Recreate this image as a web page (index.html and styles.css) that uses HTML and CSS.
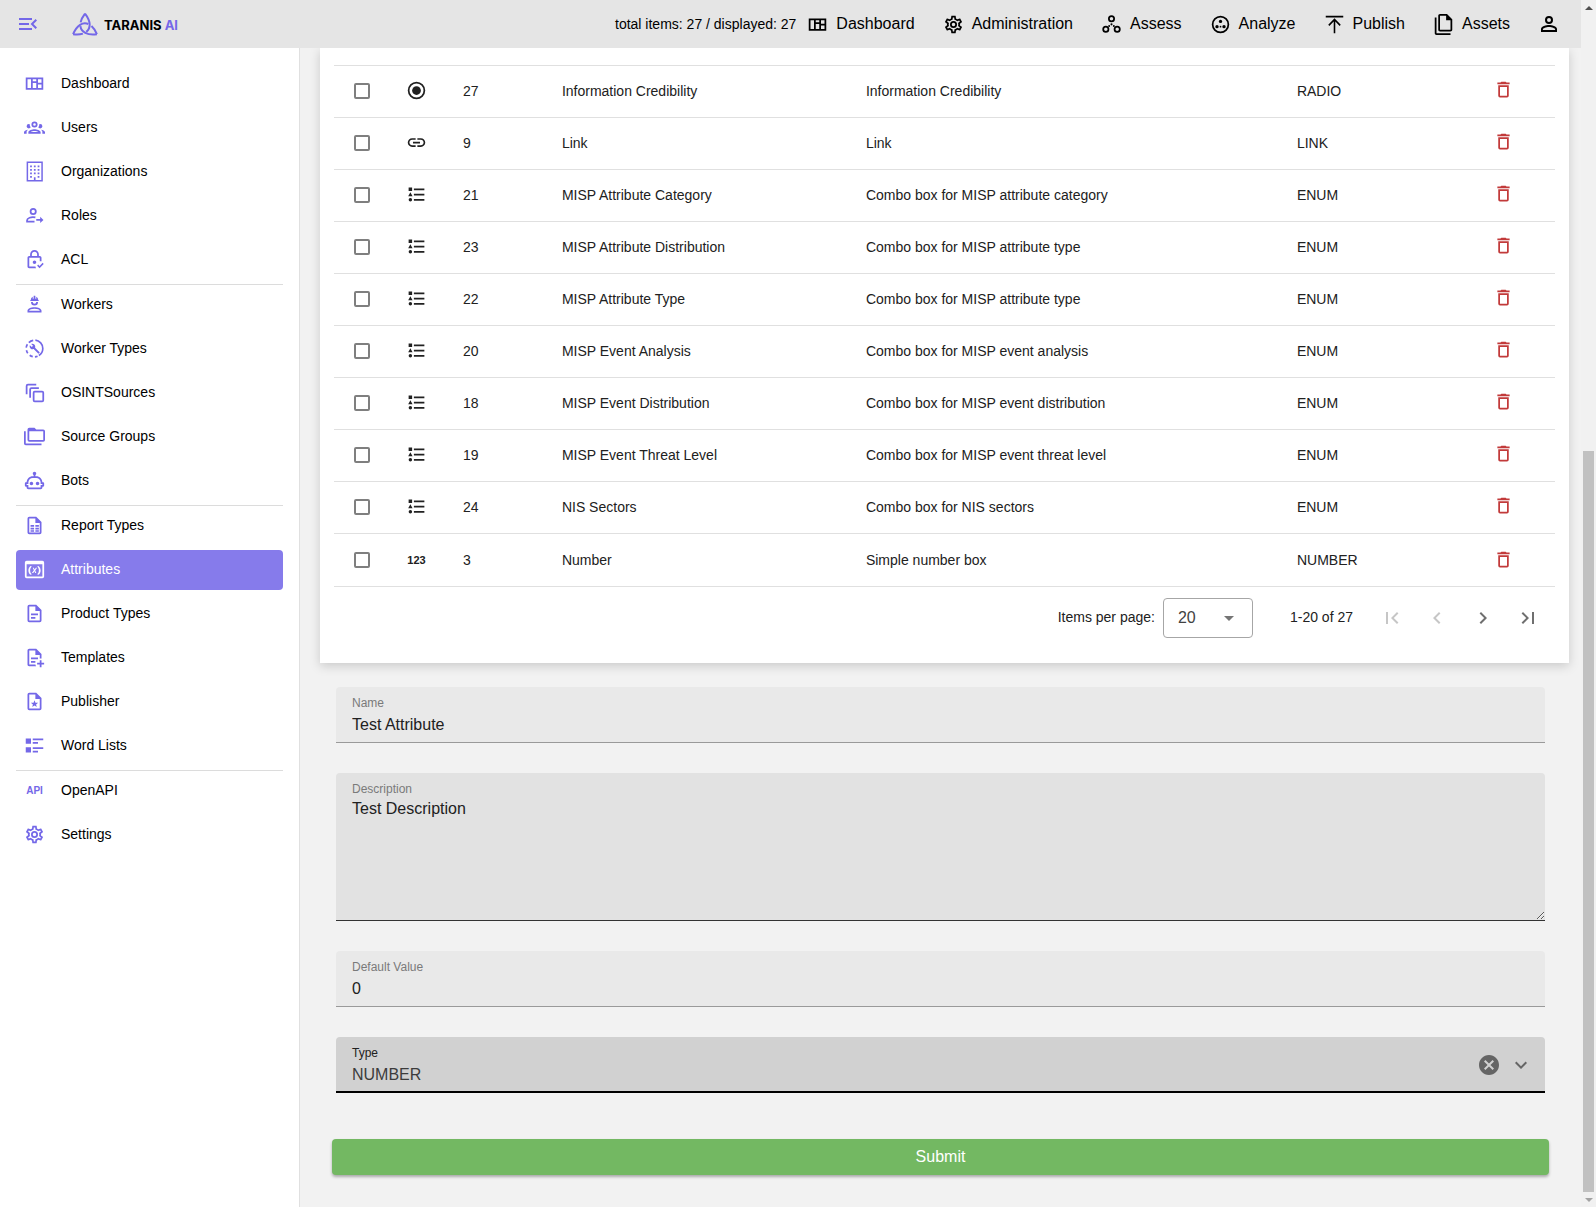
FILE: index.html
```html
<!DOCTYPE html>
<html lang="en">
<head>
<meta charset="utf-8">
<title>Taranis AI - Attributes</title>
<meta name="viewport" content="width=device-width, initial-scale=1">
<link rel="stylesheet" href="styles.css">
</head>
<body>
<svg class="sprite" aria-hidden="true">
  <symbol id="i-menu" viewBox="0 0 24 24"><path d="M21,15.61L19.59,17L14.58,12L19.59,7L21,8.39L17.44,12L21,15.61M3,6H16V8H3V6M3,13V11H13V13H3M3,18V16H16V18H3Z"/></symbol>
  <symbol id="i-dash" viewBox="0 0 24 24"><path fill-rule="evenodd" d="M2 5H22V19H2ZM4 7V17H8V7ZM10 7V9.500H14V7ZM10 11.500V17H14V11.500ZM16 7V11H20V7ZM16 13V17H20V13Z"/></symbol>
  <symbol id="i-users" viewBox="0 0 24 24"><path d="M12,5A3.5,3.5 0 0,0 8.5,8.5A3.5,3.5 0 0,0 12,12A3.5,3.5 0 0,0 15.5,8.5A3.5,3.5 0 0,0 12,5M12,7A1.5,1.5 0 0,1 13.5,8.5A1.5,1.5 0 0,1 12,10A1.5,1.5 0 0,1 10.5,8.5A1.5,1.5 0 0,1 12,7M5.5,8A2.5,2.5 0 0,0 3,10.5C3,11.44 3.53,12.25 4.29,12.68C4.65,12.88 5.06,13 5.5,13C5.94,13 6.35,12.88 6.71,12.68C7.08,12.47 7.39,12.17 7.62,11.81C6.89,10.86 6.5,9.7 6.5,8.5C6.5,8.41 6.5,8.31 6.5,8.22C6.2,8.08 5.86,8 5.5,8M18.5,8C18.14,8 17.8,8.08 17.5,8.22C17.5,8.31 17.5,8.41 17.5,8.5C17.5,9.7 17.11,10.86 16.38,11.81C16.5,12 16.63,12.15 16.78,12.3C16.94,12.45 17.1,12.58 17.29,12.68C17.65,12.88 18.06,13 18.5,13C18.94,13 19.35,12.88 19.71,12.68C20.47,12.25 21,11.44 21,10.5A2.5,2.5 0 0,0 18.5,8M12,14C9.66,14 5,15.17 5,17.5V19H19V17.5C19,15.17 14.34,14 12,14M4.71,14.55C2.78,14.78 0,15.76 0,17.5V19H3V17.07C3,16.06 3.69,15.22 4.71,14.55M19.29,14.55C20.31,15.22 21,16.06 21,17.07V19H24V17.5C24,15.76 21.22,14.78 19.29,14.55M12,16C13.53,16 15.24,16.5 16.23,17H7.77C8.76,16.5 10.47,16 12,16Z"/></symbol>
  <symbol id="i-org" viewBox="0 0 24 24"><path fill-rule="evenodd" d="M3 0.500H21.500V23.500H3ZM4.700 2.200V21.800H11.300V18.500H13.200V21.800H19.800V2.200Z"/><path d="M7 5h2v2H7zM11.300 5h2v2h-2zM15.600 5h2v2h-2zM7 9h2v2H7zM11.300 9h2v2h-2zM15.600 9h2v2h-2zM7 13h2v2H7zM11.300 13h2v2h-2zM15.600 13h2v2h-2zM7 17h2v2H7zM15.600 17h2v2h-2z"/></symbol>
  <symbol id="i-roles" viewBox="0 0 24 24"><g fill="none" stroke="currentColor" stroke-width="2"><circle cx="10.500" cy="7.500" r="3"/><path d="M13 14.200C8 13.200 3.500 15 3.500 17.500V19H12M14 17H20"/></g><path d="M18.500 13.500L22.200 17L18.500 20.500Z"/></symbol>
  <symbol id="i-acl" viewBox="0 0 24 24"><path d="M14 15C14 16.11 13.11 17 12 17C10.89 17 10 16.1 10 15C10 13.89 10.89 13 12 13C13.1 13 14 13.9 14 15M13.09 20C13.21 20.72 13.46 21.39 13.81 22H6C4.89 22 4 21.1 4 20V10C4 8.89 4.89 8 6 8H7V6C7 3.24 9.24 1 12 1S17 3.24 17 6V8H18C19.11 8 20 8.9 20 10V14.09C19.67 14.04 19.34 14 19 14C18.66 14 18.33 14.04 18 14.09V10H6V20H13.09M9 8H15V6C15 4.34 13.66 3 12 3S9 4.34 9 6V8M21.34 15.84L17.75 19.43L16.16 17.84L15 19L17.75 22L22.5 17.25L21.34 15.84Z"/></symbol>
  <symbol id="i-worker" viewBox="0 0 24 24"><path fill-rule="evenodd" d="M12,15C7.58,15 4,16.79 4,19V21H20V19C20,16.79 16.42,15 12,15M12 16.900C15.200 16.900 18.100 18 18.100 19.100H5.900C5.900 18 8.800 16.900 12 16.900M8,9A4,4 0 0,0 16,9H14A2 2 0 0 1 10 9M11.5,2C11.2,2 11,2.21 11,2.5V5.5H10V3C10,3 7.75,3.86 7.75,6.75C7.75,6.75 7,6.89 7,8H17C16.95,6.89 16.25,6.75 16.25,6.75C16.25,3.86 14,3 14,3V5.5H13V2.5C13,2.21 12.81,2 12.5,2H11.5Z"/></symbol>
  <symbol id="i-wtypes" viewBox="0 0 24 24"><g fill="none" stroke="currentColor" stroke-width="1.900"><path d="M13 2.500A9.500 9.500 0 0 1 21.500 12A9.500 9.500 0 0 1 17 20"/><path d="M15.500 20.800A9.500 9.500 0 0 1 12.500 21.500M10 21.300A9.500 9.500 0 0 1 6.500 19.700M4.300 17.500A9.500 9.500 0 0 1 2.800 14M2.500 11A9.500 9.500 0 0 1 3.900 7.200M5.500 5.200A9.500 9.500 0 0 1 10.500 2.700"/></g><path d="M17.800 16.200L12.700 11.100C13.100 9.800 12.800 8.400 11.800 7.500C10.800 6.500 9.400 6.300 8.200 6.800L10.300 8.900L8.900 10.400L6.700 8.300C6.200 9.500 6.500 10.900 7.500 11.900C8.400 12.800 9.800 13.100 11 12.700L16.200 17.800C16.400 18 16.700 18 16.900 17.800L17.800 16.900C18 16.700 18 16.400 17.800 16.200Z"/></symbol>
  <symbol id="i-osint" viewBox="0 0 24 24"><g fill="none" stroke="currentColor" stroke-width="2"><rect x="11" y="11" width="11" height="11" rx="1.200"/><path d="M7 18V8.500Q7 7 8.500 7H17M3 14V4.500Q3 3 4.500 3H14"/></g></symbol>
  <symbol id="i-groups" viewBox="0 0 24 24"><path d="M22,4H14L12,2H6A2,2 0 0,0 4,4V16A2,2 0 0,0 6,18H22A2,2 0 0,0 24,16V6A2,2 0 0,0 22,4M2,6H0V20A2,2 0 0,0 2,22H20V20H2V6M6,6H22V16H6V6Z" fill-rule="evenodd"/></symbol>
  <symbol id="i-bot" viewBox="0 0 24 24"><path d="M17.5 15.5C17.5 16.61 16.61 17.5 15.5 17.5S13.5 16.61 13.5 15.5 14.4 13.5 15.5 13.5 17.5 14.4 17.5 15.5M8.5 13.5C7.4 13.5 6.5 14.4 6.5 15.5S7.4 17.5 8.5 17.5 10.5 16.61 10.5 15.5 9.61 13.5 8.5 13.5M23 15V18C23 18.55 22.55 19 22 19H21V20C21 21.11 20.11 22 19 22H5C3.9 22 3 21.11 3 20V19H2C1.45 19 1 18.55 1 18V15C1 14.45 1.45 14 2 14H3C3 10.13 6.13 7 10 7H11V5.73C10.4 5.39 10 4.74 10 4C10 2.9 10.9 2 12 2S14 2.9 14 4C14 4.74 13.6 5.39 13 5.73V7H14C17.87 7 21 10.13 21 14H22C22.55 14 23 14.45 23 15M21 16H19V14C19 11.24 16.76 9 14 9H10C7.24 9 5 11.24 5 14V16H3V17H5V20H19V17H21V16Z"/></symbol>
  <symbol id="i-file" viewBox="0 0 24 24"><path d="M14,2H6A2,2 0 0,0 4,4V20A2,2 0 0,0 6,22H18A2,2 0 0,0 20,20V8L14,2M18,20H6V4H13V9H18V20Z"/></symbol>
  <symbol id="i-report" viewBox="0 0 24 24"><use href="#i-file"/><path d="M7.500 11.500h4v2h-4zM13 11.500h4v2h-4zM7.500 14.500h4v2h-4zM13 14.500h4v2h-4zM7.500 17.500h4v1.500h-4zM13 17.500h4v1.500h-4z"/></symbol>
  <symbol id="i-attr" viewBox="0 0 24 24"><path d="M21 2H3A2 2 0 0 0 1 4V20A2 2 0 0 0 3 22H21A2 2 0 0 0 23 20V4A2 2 0 0 0 21 2M21 20H3V6H21V20M16.6 8C18.1 9.3 19 11.1 19 13C19 14.9 18.1 16.7 16.6 18L15 17.4C16.3 16.4 17 14.7 17 13S16.3 9.6 15 8.6L16.6 8M7.4 8L9 8.6C7.7 9.6 7 11.3 7 13S7.7 16.4 9 17.4L7.4 18C5.9 16.7 5 14.9 5 13S5.9 9.3 7.4 8M12.1 12L13.5 10H15L12.8 13L14.1 16H12.8L12 14L10.6 16H9L11.3 12.9L10 10H11.3L12.1 12Z"/></symbol>
  <symbol id="i-product" viewBox="0 0 24 24"><use href="#i-file"/><path d="M8 12H16V14H8V12M8 16H13V18H8V16Z"/></symbol>
  <symbol id="i-template" viewBox="0 0 24 24"><path d="M23 18H20V15H18V18H15V20H18V23H20V20H23M6 2C4.89 2 4 2.9 4 4V20C4 21.11 4.89 22 6 22H13.81C13.45 21.38 13.2 20.7 13.08 20H6V4H13V9H18V13.08C18.33 13.03 18.67 13 19 13C19.34 13 19.67 13.03 20 13.08V8L14 2M8 12V14H16V12M8 16V18H13V16Z"/></symbol>
  <symbol id="i-publisher" viewBox="0 0 24 24"><use href="#i-file"/><path d="M12 10.500L13.100 13.300L16.200 13.500L13.800 15.400L14.600 18.400L12 16.700L9.400 18.400L10.200 15.400L7.800 13.500L10.900 13.300Z"/></symbol>
  <symbol id="i-words" viewBox="0 0 24 24"><path d="M2 14H8V20H2M16 8H10V10H16M2 10H8V4H2M10 4V6H22V4M10 20H16V18H10M10 16H22V14H10"/></symbol>
  <symbol id="i-cog" viewBox="0 0 24 24"><path d="M12,8A4,4 0 0,1 16,12A4,4 0 0,1 12,16A4,4 0 0,1 8,12A4,4 0 0,1 12,8M12,10A2,2 0 0,0 10,12A2,2 0 0,0 12,14A2,2 0 0,0 14,12A2,2 0 0,0 12,10M10,22C9.75,22 9.54,21.82 9.5,21.58L9.13,18.93C8.5,18.68 7.96,18.34 7.44,17.94L4.95,18.95C4.73,19.03 4.46,18.95 4.34,18.73L2.34,15.27C2.21,15.05 2.27,14.78 2.46,14.63L4.57,12.97L4.5,12L4.57,11L2.46,9.37C2.27,9.22 2.21,8.95 2.34,8.73L4.34,5.27C4.46,5.05 4.73,4.96 4.95,5.05L7.44,6.05C7.96,5.66 8.5,5.32 9.13,5.07L9.5,2.42C9.54,2.18 9.75,2 10,2H14C14.25,2 14.46,2.18 14.5,2.42L14.87,5.07C15.5,5.32 16.04,5.66 16.56,6.05L19.05,5.05C19.27,4.96 19.54,5.05 19.66,5.27L21.66,8.73C21.79,8.95 21.73,9.22 21.54,9.37L19.43,11L19.5,12L19.43,13L21.54,14.63C21.73,14.78 21.79,15.05 21.66,15.27L19.66,18.73C19.54,18.95 19.27,19.04 19.05,18.95L16.56,17.95C16.04,18.34 15.5,18.68 14.87,18.93L14.5,21.58C14.46,21.82 14.25,22 14,22H10M11.25,4L10.88,6.61C9.68,6.86 8.62,7.5 7.85,8.39L5.44,7.35L4.69,8.65L6.8,10.2C6.4,11.37 6.4,12.64 6.8,13.8L4.68,15.36L5.43,16.66L7.86,15.62C8.63,16.5 9.68,17.14 10.87,17.38L11.24,20H12.76L13.13,17.39C14.32,17.14 15.37,16.5 16.14,15.62L18.57,16.66L19.32,15.36L17.2,13.81C17.6,12.64 17.6,11.37 17.2,10.2L19.31,8.65L18.56,7.35L16.15,8.39C15.38,7.5 14.32,6.86 13.12,6.62L12.75,4H11.25Z"/></symbol>
  <symbol id="i-assess" viewBox="0 0 24 24"><g fill="none" stroke="currentColor" stroke-width="2"><circle cx="12" cy="5.500" r="3"/><circle cx="5.500" cy="17.500" r="3"/><circle cx="18.500" cy="17.500" r="3"/></g><circle cx="12" cy="11.800" r="1.200"/><circle cx="9.300" cy="13.800" r="1.100"/><circle cx="14.700" cy="13.800" r="1.100"/></symbol>
  <symbol id="i-analyze" viewBox="0 0 24 24"><circle cx="12" cy="12" r="9" fill="none" stroke="currentColor" stroke-width="2"/><circle cx="12" cy="8.500" r="1.900"/><circle cx="8" cy="14.500" r="1.900"/><circle cx="16" cy="14.500" r="1.900"/><circle cx="12" cy="14.500" r="1"/></symbol>
  <symbol id="i-publish" viewBox="0 0 24 24"><path fill="none" stroke="currentColor" stroke-width="1.800" d="M2 3H22M12 22V6M5.500 13L12 6.200L18.500 13"/></symbol>
  <symbol id="i-assets" viewBox="0 0 24 24"><path d="M16 0H8C6.9 0 6 .9 6 2V18C6 19.1 6.9 20 8 20H20C21.1 20 22 19.1 22 18V6L16 0M20 18H8V2H15V7H20V18M4 4V22H20V24H4C2.9 24 2 23.1 2 22V4H4Z"/></symbol>
  <symbol id="i-account" viewBox="0 0 24 24"><path d="M12,4A4,4 0 0,1 16,8A4,4 0 0,1 12,12A4,4 0 0,1 8,8A4,4 0 0,1 12,4M12,6A2,2 0 0,0 10,8A2,2 0 0,0 12,10A2,2 0 0,0 14,8A2,2 0 0,0 12,6M12,13C14.67,13 20,14.33 20,17V20H4V17C4,14.33 9.33,13 12,13M12,14.9C9.03,14.9 5.9,16.36 5.9,17V18.1H18.1V17C18.1,16.36 14.97,14.9 12,14.9Z"/></symbol>
  <symbol id="i-radio" viewBox="0 0 24 24"><circle cx="12" cy="12" r="9" fill="none" stroke="currentColor" stroke-width="2"/><circle cx="12" cy="12" r="5"/></symbol>
  <symbol id="i-link" viewBox="0 0 24 24"><path d="M3.9,12C3.9,10.29 5.29,8.9 7,8.9H11V7H7A5,5 0 0,0 2,12A5,5 0 0,0 7,17H11V15.1H7C5.29,15.1 3.9,13.71 3.9,12M8,13H16V11H8V13M17,7H13V8.9H17C18.71,8.9 20.1,10.29 20.1,12C20.1,13.71 18.71,15.1 17,15.1H13V17H17A5,5 0 0,0 22,12A5,5 0 0,0 17,7Z"/></symbol>
  <symbol id="i-enum" viewBox="0 0 24 24"><path d="M5,9.5L7.5,14H2.5L5,9.5M3,4H7V8H3V4M5,20A2,2 0 0,0 7,18A2,2 0 0,0 5,16A2,2 0 0,0 3,18A2,2 0 0,0 5,20M9,5V7H21V5H9M9,19H21V17H9V19M9,13H21V11H9V13Z"/></symbol>
  <symbol id="i-delete" viewBox="0 0 24 24"><path d="M6,19A2,2 0 0,0 8,21H16A2,2 0 0,0 18,19V7H6V19M8,9H16V19H8V9M15.5,4L14.5,3H9.5L8.5,4H5V6H19V4H15.5Z"/></symbol>
  <symbol id="i-first" viewBox="0 0 24 24"><path d="M18.41,16.59L13.82,12L18.41,7.41L17,6L11,12L17,18L18.41,16.59M6,6H8V18H6V6Z"/></symbol>
  <symbol id="i-prev" viewBox="0 0 24 24"><path d="M15.41,16.58L10.83,12L15.41,7.41L14,6L8,12L14,18L15.41,16.58Z"/></symbol>
  <symbol id="i-next" viewBox="0 0 24 24"><path d="M8.59,16.58L13.17,12L8.59,7.41L10,6L16,12L10,18L8.59,16.58Z"/></symbol>
  <symbol id="i-last" viewBox="0 0 24 24"><path d="M5.59,7.41L10.18,12L5.59,16.59L7,18L13,12L7,6L5.59,7.41M16,6H18V18H16V6Z"/></symbol>
  <symbol id="i-caret" viewBox="0 0 24 24"><path d="M7,10L12,15L17,10H7Z"/></symbol>
  <symbol id="i-clear" viewBox="0 0 24 24"><path d="M12,2C17.53,2 22,6.47 22,12C22,17.53 17.53,22 12,22C6.47,22 2,17.53 2,12C2,6.47 6.47,2 12,2M15.59,7L12,10.59L8.41,7L7,8.41L10.59,12L7,15.59L8.41,17L12,13.41L15.59,17L17,15.59L13.41,12L17,8.41L15.59,7Z"/></symbol>
  <symbol id="i-down" viewBox="0 0 24 24"><path d="M7.41,8.58L12,13.17L16.59,8.58L18,10L12,16L6,10L7.41,8.58Z"/></symbol>
</svg>

<div class="window">
  <div class="app">
    <header class="topbar">
      <button class="icon-btn menu-btn" aria-label="Toggle menu"><svg class="icon-lg"><use href="#i-menu"/></svg></button>
      <a class="brand" href="#">
        <svg class="brand-mark" viewBox="0 0 26 24">
          <path id="leaf" pathLength="100" d="M13 1.600C22.600 14 16.800 24.300 1.100 22.200"/>
          <use href="#leaf" transform="rotate(120 13 15.330)"/>
          <use href="#leaf" transform="rotate(240 13 15.330)"/>
        </svg>
        <span class="brand-name">TARANIS <span class="brand-ai">AI</span></span>
      </a>
      <span class="counts">total items: 27 / displayed: 27</span>
      <nav class="topnav" aria-label="Main">
        <a href="#"><svg class="icon"><use href="#i-dash"/></svg>Dashboard</a>
        <a href="#"><svg class="icon"><use href="#i-cog"/></svg>Administration</a>
        <a href="#"><svg class="icon"><use href="#i-assess"/></svg>Assess</a>
        <a href="#"><svg class="icon"><use href="#i-analyze"/></svg>Analyze</a>
        <a href="#"><svg class="icon"><use href="#i-publish"/></svg>Publish</a>
        <a href="#"><svg class="icon"><use href="#i-assets"/></svg>Assets</a>
      </nav>
      <button class="icon-btn" aria-label="Account"><svg class="icon-lg"><use href="#i-account"/></svg></button>
    </header>

    <nav class="sidebar" aria-label="Administration">
      <a href="#"><svg class="icon"><use href="#i-dash"/></svg>Dashboard</a>
      <a href="#"><svg class="icon"><use href="#i-users"/></svg>Users</a>
      <a href="#"><svg class="icon"><use href="#i-org"/></svg>Organizations</a>
      <a href="#"><svg class="icon"><use href="#i-roles"/></svg>Roles</a>
      <a href="#"><svg class="icon"><use href="#i-acl"/></svg>ACL</a>
      <hr>
      <a href="#"><svg class="icon"><use href="#i-worker"/></svg>Workers</a>
      <a href="#"><svg class="icon"><use href="#i-wtypes"/></svg>Worker Types</a>
      <a href="#"><svg class="icon"><use href="#i-osint"/></svg>OSINTSources</a>
      <a href="#"><svg class="icon"><use href="#i-groups"/></svg>Source Groups</a>
      <a href="#"><svg class="icon"><use href="#i-bot"/></svg>Bots</a>
      <hr>
      <a href="#"><svg class="icon"><use href="#i-report"/></svg>Report Types</a>
      <a href="#" class="active" aria-current="page"><svg class="icon"><use href="#i-attr"/></svg>Attributes</a>
      <a href="#"><svg class="icon"><use href="#i-product"/></svg>Product Types</a>
      <a href="#"><svg class="icon"><use href="#i-template"/></svg>Templates</a>
      <a href="#"><svg class="icon"><use href="#i-publisher"/></svg>Publisher</a>
      <a href="#"><svg class="icon"><use href="#i-words"/></svg>Word Lists</a>
      <hr>
      <a href="#"><span class="icon text-icon" aria-hidden="true">API</span>OpenAPI</a>
      <a href="#"><svg class="icon"><use href="#i-cog"/></svg>Settings</a>
    </nav>

    <main class="content">
      <section class="card">
        <table class="attributes">
          <colgroup><col class="c-check"><col class="c-icon"><col class="c-id"><col class="c-name"><col class="c-desc"><col><col class="c-actions"></colgroup>
          <tbody>
            <tr><td><input type="checkbox" aria-label="Select 27"></td><td><svg class="icon"><use href="#i-radio"/></svg></td><td>27</td><td>Information Credibility</td><td>Information Credibility</td><td>RADIO</td><td><button class="delete" aria-label="Delete 27"><svg class="icon"><use href="#i-delete"/></svg></button></td></tr>
            <tr><td><input type="checkbox" aria-label="Select 9"></td><td><svg class="icon"><use href="#i-link"/></svg></td><td>9</td><td>Link</td><td>Link</td><td>LINK</td><td><button class="delete" aria-label="Delete 9"><svg class="icon"><use href="#i-delete"/></svg></button></td></tr>
            <tr><td><input type="checkbox" aria-label="Select 21"></td><td><svg class="icon"><use href="#i-enum"/></svg></td><td>21</td><td>MISP Attribute Category</td><td>Combo box for MISP attribute category</td><td>ENUM</td><td><button class="delete" aria-label="Delete 21"><svg class="icon"><use href="#i-delete"/></svg></button></td></tr>
            <tr><td><input type="checkbox" aria-label="Select 23"></td><td><svg class="icon"><use href="#i-enum"/></svg></td><td>23</td><td>MISP Attribute Distribution</td><td>Combo box for MISP attribute type</td><td>ENUM</td><td><button class="delete" aria-label="Delete 23"><svg class="icon"><use href="#i-delete"/></svg></button></td></tr>
            <tr><td><input type="checkbox" aria-label="Select 22"></td><td><svg class="icon"><use href="#i-enum"/></svg></td><td>22</td><td>MISP Attribute Type</td><td>Combo box for MISP attribute type</td><td>ENUM</td><td><button class="delete" aria-label="Delete 22"><svg class="icon"><use href="#i-delete"/></svg></button></td></tr>
            <tr><td><input type="checkbox" aria-label="Select 20"></td><td><svg class="icon"><use href="#i-enum"/></svg></td><td>20</td><td>MISP Event Analysis</td><td>Combo box for MISP event analysis</td><td>ENUM</td><td><button class="delete" aria-label="Delete 20"><svg class="icon"><use href="#i-delete"/></svg></button></td></tr>
            <tr><td><input type="checkbox" aria-label="Select 18"></td><td><svg class="icon"><use href="#i-enum"/></svg></td><td>18</td><td>MISP Event Distribution</td><td>Combo box for MISP event distribution</td><td>ENUM</td><td><button class="delete" aria-label="Delete 18"><svg class="icon"><use href="#i-delete"/></svg></button></td></tr>
            <tr><td><input type="checkbox" aria-label="Select 19"></td><td><svg class="icon"><use href="#i-enum"/></svg></td><td>19</td><td>MISP Event Threat Level</td><td>Combo box for MISP event threat level</td><td>ENUM</td><td><button class="delete" aria-label="Delete 19"><svg class="icon"><use href="#i-delete"/></svg></button></td></tr>
            <tr><td><input type="checkbox" aria-label="Select 24"></td><td><svg class="icon"><use href="#i-enum"/></svg></td><td>24</td><td>NIS Sectors</td><td>Combo box for NIS sectors</td><td>ENUM</td><td><button class="delete" aria-label="Delete 24"><svg class="icon"><use href="#i-delete"/></svg></button></td></tr>
            <tr><td><input type="checkbox" aria-label="Select 3"></td><td><span class="icon text-icon wide" aria-hidden="true">123</span></td><td>3</td><td>Number</td><td>Simple number box</td><td>NUMBER</td><td><button class="delete" aria-label="Delete 3"><svg class="icon"><use href="#i-delete"/></svg></button></td></tr>
          </tbody>
        </table>
        <div class="table-footer">
          <label for="per-page">Items per page:</label>
          <span class="per-page">
            <select id="per-page"><option>10</option><option selected>20</option><option>50</option></select>
            <svg class="icon-lg"><use href="#i-caret"/></svg>
          </span>
          <span class="range">1-20 of 27</span>
          <div class="pager">
            <button class="icon-btn" aria-label="First page" disabled><svg class="icon-lg"><use href="#i-first"/></svg></button>
            <button class="icon-btn" aria-label="Previous page" disabled><svg class="icon-lg"><use href="#i-prev"/></svg></button>
            <button class="icon-btn" aria-label="Next page"><svg class="icon-lg"><use href="#i-next"/></svg></button>
            <button class="icon-btn" aria-label="Last page"><svg class="icon-lg"><use href="#i-last"/></svg></button>
          </div>
        </div>
      </section>

      <form class="form">
        <div class="field">
          <label for="name">Name</label>
          <input id="name" type="text" value="Test Attribute">
        </div>
        <div class="field hovered">
          <label for="description">Description</label>
          <textarea id="description">Test Description</textarea>
        </div>
        <div class="field">
          <label for="default">Default Value</label>
          <input id="default" type="text" value="0">
        </div>
        <div class="field focused">
          <label for="type">Type</label>
          <select id="type"><option>NUMBER</option><option>STRING</option></select>
          <div class="field-icons">
            <button type="button" class="icon-btn" aria-label="Clear Type"><svg class="icon-lg"><use href="#i-clear"/></svg></button>
            <svg class="icon-lg"><use href="#i-down"/></svg>
          </div>
        </div>
        <button class="submit" type="button">Submit</button>
      </form>
    </main>
  </div>

  <div class="scrollbar" aria-hidden="true">
    <span class="arrow up"></span>
    <div class="track"><div class="thumb"></div></div>
    <span class="arrow down"></span>
  </div>
</div>
</body>
</html>
```
FILE: styles.css
```css
:root {
  --primary: #7468e8;
  --line: #e0e0e0;
  --page: #f2f2f2;
}

* { box-sizing: border-box; }

body {
  margin: 0;
  background: var(--page);
  color: #212121;
  font: 14px/20px "Liberation Sans", Arial, sans-serif;
}

a { color: #000; text-decoration: none; }

button, input, select, textarea {
  margin: 0;
  padding: 0;
  border: 0;
  background: none;
  color: inherit;
  font: inherit;
  outline: none;
}

svg { display: block; fill: currentColor; }

.sprite { display: none; }
.icon { flex: none; width: 21px; height: 21px; }
.icon-lg { flex: none; width: 24px; height: 24px; }
.icon-btn { display: flex; align-items: center; justify-content: center; }

.text-icon {
  display: flex;
  align-items: center;
  justify-content: center;
  font-size: 10px;
  font-weight: bold;
}
.text-icon.wide { font-size: 11px; }

/* Page frame */

.window {
  display: grid;
  grid-template-columns: minmax(0, 1fr) 15px;
  min-height: 100vh;
}

.app {
  display: grid;
  grid-template-columns: 300px minmax(0, 1fr);
  grid-template-rows: 48px 1fr;
}

.topbar {
  grid-column: 1 / -1;
  z-index: 1;
  display: flex;
  align-items: center;
  padding: 0 20px 0 16px;
  background: #e5e5e5;
  color: #000;
}

.menu-btn { color: var(--primary); }

.brand {
  display: flex;
  align-items: center;
  gap: 6px;
  margin-left: 32px;
}
.brand-mark {
  width: 26px;
  height: 24px;
  overflow: visible;
  fill: none;
  stroke: var(--primary);
  stroke-width: 2;
  stroke-linejoin: round;
  stroke-dasharray: 60 11 29;
}
.brand-name { padding-top: 2px; font: bold 13px/20px Inter, sans-serif; }
.brand-ai { color: var(--primary); }

.counts { margin-left: auto; }

.topnav {
  display: flex;
  gap: 28px;
  margin: 0 27px 0 11px;
}
.topnav a {
  display: flex;
  align-items: center;
  gap: 8px;
  font-size: 16px;
  line-height: 46px;
}

/* Sidebar */

.sidebar {
  padding: 16px;
  border-right: 1px solid var(--line);
  background: #fff;
}
.sidebar a {
  display: flex;
  align-items: center;
  gap: 16px;
  height: 40px;
  margin-bottom: 4px;
  padding: 0 8px 1px;
  border-radius: 4px;
  line-height: 17px;
}
.sidebar .icon { color: var(--primary); }
.sidebar .active { background: #867beb; color: #fff; }
.sidebar .active .icon { color: #fff; }
.sidebar hr {
  height: 1px;
  margin: 0;
  border: 0;
  background: #dcdcdc;
}

/* Attribute table */

.content { padding: 0 12px 24px 20px; overflow: hidden; }

.card {
  padding: 17px 14px 25px;
  background: #fff;
  box-shadow: 0 3px 10px rgba(0, 0, 0, .17);
}

.attributes {
  width: 100%;
  border-spacing: 0;
  table-layout: fixed;
}
.c-check { width: 56px; }
.c-icon { width: 57px; }
.c-id { width: 8.1%; }
.c-name { width: 24.9%; }
.c-desc { width: 35.3%; }
.c-actions { width: 82px; }

.attributes td {
  height: 52px;
  padding: 0 16px 2px;
  border-top: 1px solid var(--line);
}
.attributes tr:last-child td { height: 53px; padding-bottom: 0; }

.attributes input {
  display: block;
  width: 16px;
  height: 16px;
  margin-left: 4px;
  border: 2px solid #7f7f7f;
  border-radius: 2px;
  appearance: none;
}

.delete { display: block; margin: 0 0 2px 4px; color: #c23a3a; }

.table-footer {
  display: flex;
  align-items: center;
  justify-content: flex-end;
  padding: 11px 4px 0;
  border-top: 1px solid var(--line);
}
.table-footer label, .range { padding-bottom: 2px; }

.per-page {
  display: flex;
  align-items: center;
  width: 90px;
  height: 40px;
  margin: 0 37px 0 8px;
  padding-right: 11px;
  border: 1px solid #a6a6a6;
  border-radius: 4px;
  color: #757575;
}
.per-page select {
  flex: 1;
  min-width: 0;
  padding-left: 14px;
  color: #424242;
  font-size: 16px;
  appearance: none;
}

.pager { display: flex; width: 182px; margin-left: 16px; color: #6f6f6f; }
.pager button { flex: 1; }
.pager button:disabled { color: #c6c6c6; }

/* Form */

.form {
  display: flex;
  flex-direction: column;
  gap: 30px;
  padding: 24px 20px 0 12px;
}

.field {
  display: grid;
  grid-template-columns: minmax(0, 1fr) auto;
  margin: 0 4px;
  border-bottom: 1px solid #9a9a9a;
  border-radius: 4px 4px 0 0;
  background: #e9e9e9;
}
.field label {
  grid-column: 1;
  padding: 8px 16px 0;
  color: #7a7a7a;
  font-size: 12px;
  line-height: 16px;
}
.field input, .field select {
  grid-column: 1;
  height: 31px;
  padding: 0 16px 4px;
  font-size: 16px;
  line-height: 24px;
  appearance: none;
}
.field textarea {
  grid-column: 1 / -1;
  height: 123px;
  padding: 0 16px;
  font-size: 16px;
  line-height: 24px;
  resize: vertical;
}

.field.hovered { border-color: #333; background: #e2e2e2; }
.field.focused { border-bottom: 2px solid #000; background: #d1d1d1; }
.field.focused label { color: #212121; }
.field.focused select { height: 30px; padding-bottom: 2px; color: #3c3c3c; }

.field-icons {
  grid-column: 2;
  grid-row: 1 / 3;
  display: flex;
  align-items: center;
  gap: 8px;
  padding: 2px 12px 0;
  color: #656565;
}

.submit {
  height: 36px;
  margin-top: 16px;
  border-radius: 4px;
  background: #73b862;
  box-shadow: 0 2px 3px rgba(0, 0, 0, .3);
  color: #fff;
  font-size: 16px;
}

/* Page scrollbar */

.scrollbar {
  position: sticky;
  top: 0;
  display: flex;
  flex-direction: column;
  align-items: center;
  height: 100vh;
  background: #f1f1f1;
}
.track {
  display: flex;
  flex: 1;
  align-items: flex-end;
  width: 11px;
}
.thumb { width: 100%; height: 63%; background: #c1c1c1; }
.arrow {
  display: flex;
  align-items: center;
  justify-content: center;
  width: 15px;
  height: 15px;
}
.arrow::before {
  content: "";
  border: 4px solid transparent;
}
.arrow.up::before { border-top: 0; border-bottom-color: #505050; }
.arrow.down::before { border-bottom: 0; border-top-color: #a3a3a3; }
```
